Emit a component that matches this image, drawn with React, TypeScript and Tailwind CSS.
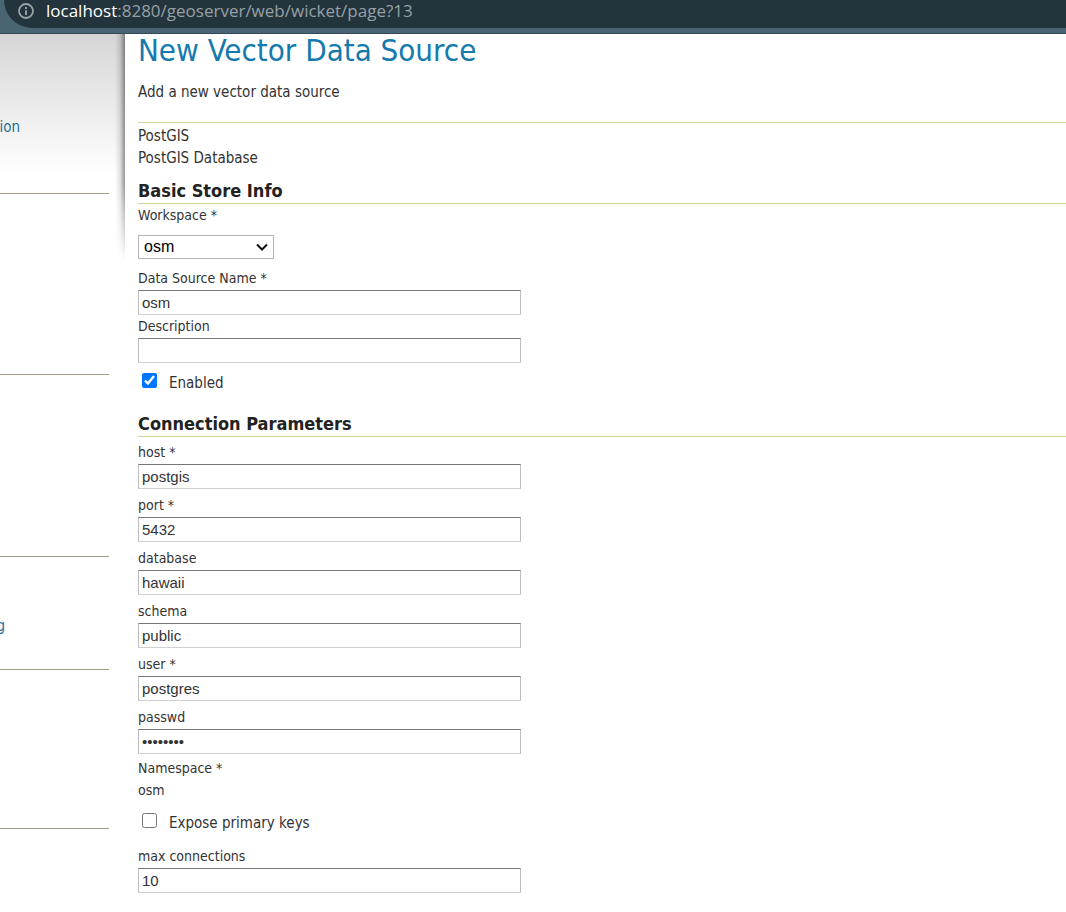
import { useState, type ReactNode } from "react";

function InfoIcon() {
  return (
    <svg width="16" height="16" viewBox="0 0 16 16" fill="none" stroke="#99a3a8" aria-hidden="true">
      <circle cx="8" cy="8" r="7" strokeWidth="1.8" />
      <path d="M8 7.2V12" strokeWidth="1.9" />
      <path d="M8 4V5.9" strokeWidth="1.9" />
    </svg>
  );
}

function AddressBar() {
  return (
    <header className="h-[34px] border-b border-[#34475a] bg-[#4a6572]">
      <div className="ml-1 flex h-7 items-center rounded-bl-[28px] bg-[#24343c] pb-[7px] pl-[14px]">
        <InfoIcon />
        <div className="ml-3 whitespace-nowrap font-['Open_Sans','Noto_Sans',sans-serif] text-[17px] leading-5 text-[#96a1a6]">
          <span className="text-white">localhost</span>:8280/geoserver/web/wicket/page?13
        </div>
      </div>
    </header>
  );
}

function Sidebar() {
  const rule = "mr-4 border-b border-[#a09c84]";
  return (
    <nav className="relative w-[125px] shrink-0 bg-[linear-gradient(#d6d6d6,#ffffff_140px)] text-[15px]">
      <div className={`${rule} h-40 pt-[83px]`}>
        <a href="#configuration" className="flex w-5 justify-end overflow-hidden leading-5 text-[#1f7096]">
          tion
        </a>
      </div>
      <div className={`${rule} h-[181px]`} />
      <div className={`${rule} h-[182px]`} />
      <div className={`${rule} h-[113px] pt-[59px]`}>
        <a href="#caching" className="flex w-[5px] justify-end overflow-hidden leading-5 text-[#1f7096]">
          g
        </a>
      </div>
      <div className={`${rule} h-[159px]`} />
      <div className="absolute right-0 top-0 h-[228px] w-[10px] bg-[linear-gradient(to_right,transparent,#0000001c_50%,#0000006a)] [mask-image:linear-gradient(black_65%,transparent)]" />
    </nav>
  );
}

function SectionTitle({ children }: { children: ReactNode }) {
  return (
    <h2 className="border-b border-[#cdd5a3] text-[18px] font-bold leading-6 text-[#222222]">{children}</h2>
  );
}

type FieldProps = { id: string; label: string; value?: string; type?: string };

function Field({ id, label, value = "", type = "text" }: FieldProps) {
  const [text, setText] = useState(value);
  return (
    <div className="flex flex-col">
      <label htmlFor={id} className="leading-[23px]">
        {label}
      </label>
      <input
        id={id}
        type={type}
        value={text}
        onChange={(e) => setText(e.target.value)}
        className="h-[25px] w-[383px] max-w-full border border-x-[#bdbdbd] border-b-[#d0d0d0] border-t-[#767676] bg-white px-[3px] font-['Liberation_Sans',Arial,sans-serif] text-[15px] text-[#333333] outline-none"
      />
    </div>
  );
}

function Check({ id, label, on = false }: { id: string; label: string; on?: boolean }) {
  return (
    <div className="flex items-start gap-3 pl-1">
      <input id={id} type="checkbox" defaultChecked={on} className="mt-0.5 size-[15px] accent-[#0075ff]" />
      <label htmlFor={id} className="text-[15px] leading-6">
        {label}
      </label>
    </div>
  );
}

export default function App() {
  return (
    <div className="min-h-screen bg-white font-['DejaVu_Sans_Condensed','DejaVu_Sans',sans-serif] text-[14px] text-[#333333]">
      <AddressBar />
      <div className="flex">
        <Sidebar />
        <main className="min-w-0 grow pl-[13px]">
          <h1 className="text-[31px] leading-8 text-[#147aad]">New Vector Data Source</h1>
          <p className="mt-4 text-[15px] leading-5">Add a new vector data source</p>
          <div className="mt-5 border-t border-[#cdd5a3] pt-0.5 text-[15px] leading-[22px]">
            <p>PostGIS</p>
            <p>PostGIS Database</p>
          </div>
          <form>
            <div className="mt-[10px]">
              <SectionTitle>Basic Store Info</SectionTitle>
            </div>
            <label htmlFor="workspace" className="block leading-[23px]">
              Workspace *
            </label>
            <div className="relative my-2 w-[136px]">
              <select
                id="workspace"
                className="block h-6 w-full appearance-none border border-[#b5b5b5] bg-white pl-[5px] font-['Liberation_Sans',Arial,sans-serif] text-[16px] leading-5 text-black"
              >
                <option>osm</option>
              </select>
              <svg
                className="pointer-events-none absolute right-1.5 top-2"
                width="12"
                height="9"
                viewBox="0 0 12 9"
                fill="none"
                stroke="#111111"
                strokeWidth="2"
                aria-hidden="true"
              >
                <path d="M1 1.5 6 6.5 11 1.5" />
              </svg>
            </div>
            <Field id="name" label="Data Source Name *" value="osm" />
            <Field id="description" label="Description" />
            <div className="mt-2">
              <Check id="enabled" label="Enabled" on />
            </div>
            <div className="mt-[17px]">
              <SectionTitle>Connection Parameters</SectionTitle>
            </div>
            <div className="mt-1 flex flex-col gap-[5px]">
              <Field id="host" label="host *" value="postgis" />
              <Field id="port" label="port *" value="5432" />
              <Field id="database" label="database" value="hawaii" />
              <Field id="schema" label="schema" value="public" />
              <Field id="user" label="user *" value="postgres" />
              <Field id="passwd" label="passwd" value="postgres" type="password" />
            </div>
            <div className="mt-[3px] leading-[22px]">
              <p>Namespace *</p>
              <p>osm</p>
            </div>
            <div className="my-[10px]">
              <Check id="expose" label="Expose primary keys" />
            </div>
            <Field id="max" label="max connections" value="10" />
          </form>
        </main>
      </div>
    </div>
  );
}
